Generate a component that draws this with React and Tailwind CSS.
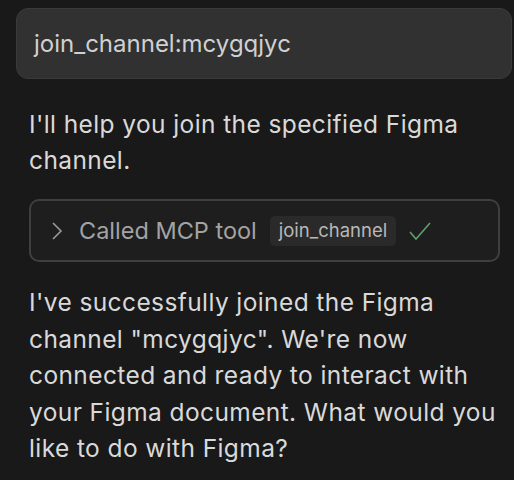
import React from 'react';

function ChevronRight() {
  return (
    <svg width="12" height="20" viewBox="0 0 12 20" fill="none" stroke="#9a9a9a" strokeWidth="1.6">
      <path d="M2 2 L10 10 L2 18" />
    </svg>
  );
}

function Check() {
  return (
    <svg width="22" height="20" viewBox="0 0 22 20" fill="none" stroke="#5f9f6e" strokeWidth="1.6">
      <path d="M1 11 L7 18 L21 2" />
    </svg>
  );
}

export default function App() {
  return (
    <div
      className="min-h-screen w-[514px] bg-[#191919] pt-2 pl-4 pr-[2px] text-[#d9d9d9]"
      style={{ fontFamily: 'Inter, "Noto Sans", sans-serif' }}
    >
      <div className="flex h-[71px] items-center rounded-xl border border-[#3a3a3a] bg-[#313131] pl-[17px] text-[24px] text-[#d0d0d0]">
        join_channel:mcygqjyc
      </div>

      <div className="pl-[13px] pr-3">
        <p className="mt-[27px] text-[24.5px] leading-[36px] tracking-[0.4px]">
          I'll help you join the specified Figma channel.
        </p>

        <div className="mt-[21px] flex h-[63px] w-[471px] items-center rounded-[10px] border-2 border-[#3f3f3f] bg-[#1e1e1e] pl-5">
          <ChevronRight />
          <span className="ml-4 text-[23.5px] text-[#a3a3a3]">Called MCP tool</span>
          <span className="ml-[13px] flex h-[30px] items-center rounded-[5px] bg-[#2a2a2a] px-[9px] text-[18.5px] text-[#b8b8b8]">
            join_channel
          </span>
          <span className="ml-[13px] flex items-center">
            <Check />
          </span>
        </div>

        <p className="mt-[22px] text-[24.5px] leading-[36.5px] tracking-[0.4px]">
          I've successfully joined the Figma channel "mcygqjyc". We're now connected and ready to interact with your Figma document. What would you like to do with Figma?
        </p>
      </div>
    </div>
  );
}
